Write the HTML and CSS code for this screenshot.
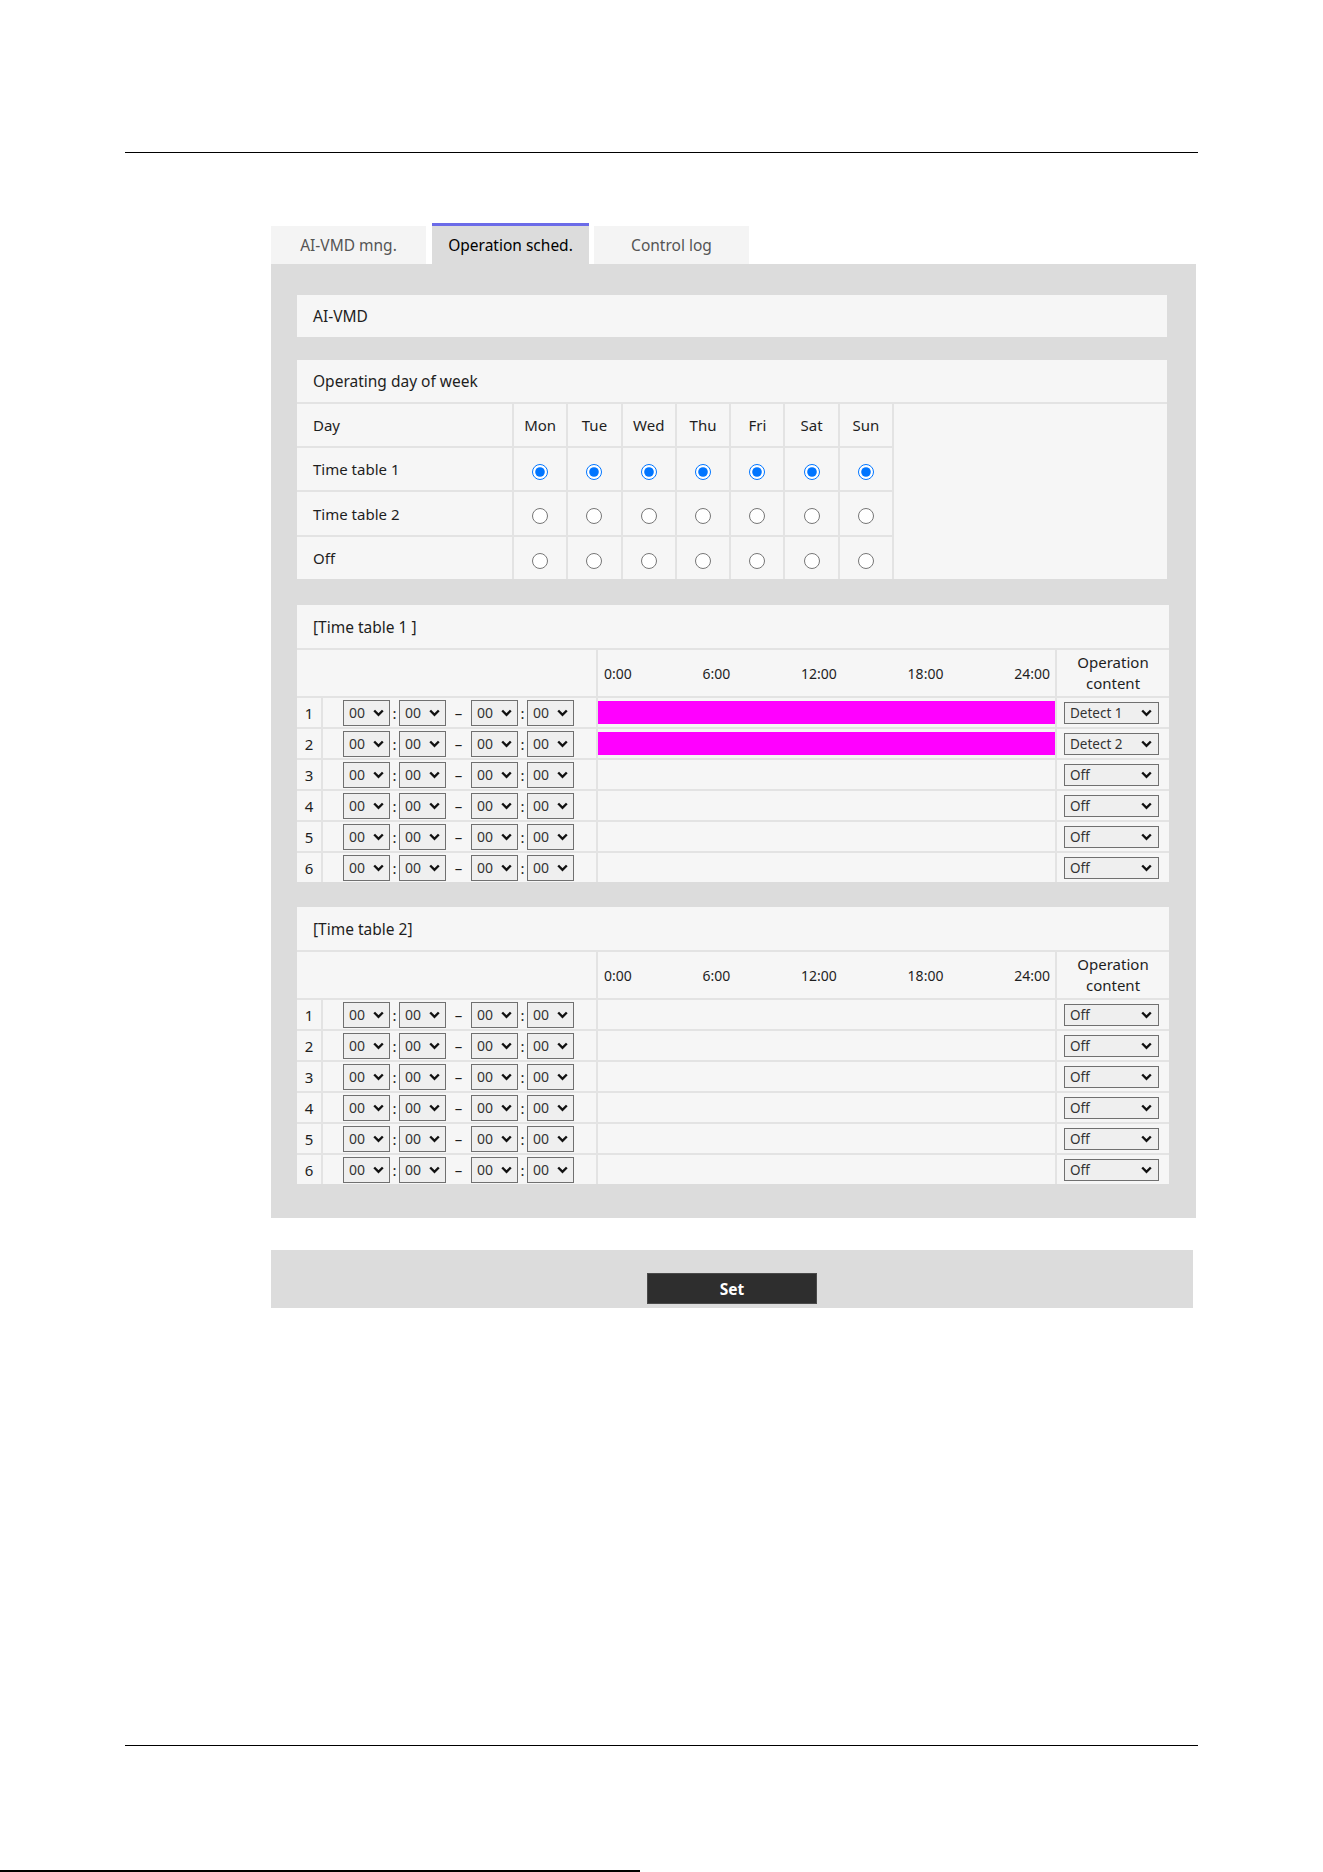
FILE: index.html
```html
<!doctype html>
<html>
 <head>
  <title>Operation sched.</title>
  <meta name="viewport" content="width=device-width, initial-scale=1">
  <link rel="stylesheet" href="styles.css">
 </head>
 <body>
  <div class="page">
   <div class="page-head"></div>
   <main class="main">
    <nav class="tabs">
     <div class="tab">AI-VMD mng.</div>
     <div class="tab active">Operation sched.</div>
     <div class="tab">Control log</div>
    </nav>
    <div class="panel">
     <div class="box">AI-VMD</div>

     <section class="days">
      <div class="title">Operating day of week</div>
      <div class="cell label">Day</div>
      <div class="cell day">Mon</div>
      <div class="cell day">Tue</div>
      <div class="cell day">Wed</div>
      <div class="cell day">Thu</div>
      <div class="cell day">Fri</div>
      <div class="cell day">Sat</div>
      <div class="cell day">Sun</div>
      <div class="cell filler"></div>
      <div class="cell label">Time table 1</div>
      <div class="cell day"><input type="radio" name="mon" checked></div>
      <div class="cell day"><input type="radio" name="tue" checked></div>
      <div class="cell day"><input type="radio" name="wed" checked></div>
      <div class="cell day"><input type="radio" name="thu" checked></div>
      <div class="cell day"><input type="radio" name="fri" checked></div>
      <div class="cell day"><input type="radio" name="sat" checked></div>
      <div class="cell day"><input type="radio" name="sun" checked></div>
      <div class="cell label">Time table 2</div>
      <div class="cell day"><input type="radio" name="mon"></div>
      <div class="cell day"><input type="radio" name="tue"></div>
      <div class="cell day"><input type="radio" name="wed"></div>
      <div class="cell day"><input type="radio" name="thu"></div>
      <div class="cell day"><input type="radio" name="fri"></div>
      <div class="cell day"><input type="radio" name="sat"></div>
      <div class="cell day"><input type="radio" name="sun"></div>
      <div class="cell label">Off</div>
      <div class="cell day"><input type="radio" name="mon"></div>
      <div class="cell day"><input type="radio" name="tue"></div>
      <div class="cell day"><input type="radio" name="wed"></div>
      <div class="cell day"><input type="radio" name="thu"></div>
      <div class="cell day"><input type="radio" name="fri"></div>
      <div class="cell day"><input type="radio" name="sat"></div>
      <div class="cell day"><input type="radio" name="sun"></div>
     </section>

     <section class="table tt1">
      <div class="title">[Time table 1 ]</div>
      <div class="cell blank"></div>
      <div class="cell hours"><span>0:00</span><span>6:00</span><span>12:00</span><span>18:00</span><span>24:00</span></div>
      <div class="cell op-head">Operation<br>content</div>

      <div class="cell num">1</div>
      <div class="cell times"><select class="hm"><option>00</option></select><span class="colon">:</span><select class="hm"><option>00</option></select><span class="dash">&ndash;</span><select class="hm"><option>00</option></select><span class="colon">:</span><select class="hm"><option>00</option></select></div>
      <div class="cell bar"><div class="fill"></div></div>
      <div class="cell op"><select class="opsel"><option>Detect 1</option></select></div>

      <div class="cell num">2</div>
      <div class="cell times"><select class="hm"><option>00</option></select><span class="colon">:</span><select class="hm"><option>00</option></select><span class="dash">&ndash;</span><select class="hm"><option>00</option></select><span class="colon">:</span><select class="hm"><option>00</option></select></div>
      <div class="cell bar"><div class="fill"></div></div>
      <div class="cell op"><select class="opsel"><option>Detect 2</option></select></div>

      <div class="cell num">3</div>
      <div class="cell times"><select class="hm"><option>00</option></select><span class="colon">:</span><select class="hm"><option>00</option></select><span class="dash">&ndash;</span><select class="hm"><option>00</option></select><span class="colon">:</span><select class="hm"><option>00</option></select></div>
      <div class="cell bar"></div>
      <div class="cell op"><select class="opsel"><option>Off</option></select></div>

      <div class="cell num">4</div>
      <div class="cell times"><select class="hm"><option>00</option></select><span class="colon">:</span><select class="hm"><option>00</option></select><span class="dash">&ndash;</span><select class="hm"><option>00</option></select><span class="colon">:</span><select class="hm"><option>00</option></select></div>
      <div class="cell bar"></div>
      <div class="cell op"><select class="opsel"><option>Off</option></select></div>

      <div class="cell num">5</div>
      <div class="cell times"><select class="hm"><option>00</option></select><span class="colon">:</span><select class="hm"><option>00</option></select><span class="dash">&ndash;</span><select class="hm"><option>00</option></select><span class="colon">:</span><select class="hm"><option>00</option></select></div>
      <div class="cell bar"></div>
      <div class="cell op"><select class="opsel"><option>Off</option></select></div>

      <div class="cell num">6</div>
      <div class="cell times"><select class="hm"><option>00</option></select><span class="colon">:</span><select class="hm"><option>00</option></select><span class="dash">&ndash;</span><select class="hm"><option>00</option></select><span class="colon">:</span><select class="hm"><option>00</option></select></div>
      <div class="cell bar"></div>
      <div class="cell op"><select class="opsel"><option>Off</option></select></div>
     </section>

     <section class="table tt2">
      <div class="title">[Time table 2]</div>
      <div class="cell blank"></div>
      <div class="cell hours"><span>0:00</span><span>6:00</span><span>12:00</span><span>18:00</span><span>24:00</span></div>
      <div class="cell op-head">Operation<br>content</div>

      <div class="cell num">1</div>
      <div class="cell times"><select class="hm"><option>00</option></select><span class="colon">:</span><select class="hm"><option>00</option></select><span class="dash">&ndash;</span><select class="hm"><option>00</option></select><span class="colon">:</span><select class="hm"><option>00</option></select></div>
      <div class="cell bar"></div>
      <div class="cell op"><select class="opsel"><option>Off</option></select></div>

      <div class="cell num">2</div>
      <div class="cell times"><select class="hm"><option>00</option></select><span class="colon">:</span><select class="hm"><option>00</option></select><span class="dash">&ndash;</span><select class="hm"><option>00</option></select><span class="colon">:</span><select class="hm"><option>00</option></select></div>
      <div class="cell bar"></div>
      <div class="cell op"><select class="opsel"><option>Off</option></select></div>

      <div class="cell num">3</div>
      <div class="cell times"><select class="hm"><option>00</option></select><span class="colon">:</span><select class="hm"><option>00</option></select><span class="dash">&ndash;</span><select class="hm"><option>00</option></select><span class="colon">:</span><select class="hm"><option>00</option></select></div>
      <div class="cell bar"></div>
      <div class="cell op"><select class="opsel"><option>Off</option></select></div>

      <div class="cell num">4</div>
      <div class="cell times"><select class="hm"><option>00</option></select><span class="colon">:</span><select class="hm"><option>00</option></select><span class="dash">&ndash;</span><select class="hm"><option>00</option></select><span class="colon">:</span><select class="hm"><option>00</option></select></div>
      <div class="cell bar"></div>
      <div class="cell op"><select class="opsel"><option>Off</option></select></div>

      <div class="cell num">5</div>
      <div class="cell times"><select class="hm"><option>00</option></select><span class="colon">:</span><select class="hm"><option>00</option></select><span class="dash">&ndash;</span><select class="hm"><option>00</option></select><span class="colon">:</span><select class="hm"><option>00</option></select></div>
      <div class="cell bar"></div>
      <div class="cell op"><select class="opsel"><option>Off</option></select></div>

      <div class="cell num">6</div>
      <div class="cell times"><select class="hm"><option>00</option></select><span class="colon">:</span><select class="hm"><option>00</option></select><span class="dash">&ndash;</span><select class="hm"><option>00</option></select><span class="colon">:</span><select class="hm"><option>00</option></select></div>
      <div class="cell bar"></div>
      <div class="cell op"><select class="opsel"><option>Off</option></select></div>
     </section>
    </div>

    <div class="setbar">
     <button class="set">Set</button>
    </div>
   </main>
   <div class="page-foot"></div>
  </div>
  <div class="page-edge"></div>
 </body>
</html>
```

FILE: styles.css
```css
body {
 margin: 0;
 background: #fff;
 color: #1e1e1e;
 font-family: "Noto Sans", "Open Sans", sans-serif;
 font-size: 15px;
}
.page {
 width: 1073px;
 margin-left: 125px;
}
.page-head {
 height: 152px;
 border-bottom: 1px solid #000;
}
.main {
 margin: 70px 0 0 146px;
 width: 925px;
}
.tabs {
 display: flex;
 align-items: flex-end;
}
.tab {
 width: 155px;
 height: 38px;
 margin-right: 6px;
 background: #f4f4f4;
 color: #555;
 font-size: 15.5px;
 display: flex;
 align-items: center;
 justify-content: center;
}
.tab.active {
 width: 157px;
 margin-right: 5px;
 background: #dcdcdc;
 color: #000;
 border-top: 3px solid #6b6be8;
}
.panel {
 background: #dcdcdc;
 padding: 31px 27px 34px 26px;
}
.box, .title {
 background: #f6f6f6;
 padding-left: 16px;
 display: flex;
 align-items: center;
 font-size: 15.5px;
}
.box {
 height: 42px;
 margin-right: 2px;
}
.days, .table {
 display: grid;
 gap: 2px;
 background: #e3e3e3;
}
.days {
 margin: 23px 2px 0 0;
 grid-template-columns: 215px repeat(7, 52.3px) 1fr;
 grid-template-rows: 42px 42px 42px 43px 42px;
}
.days .title {
 grid-column: 1 / -1;
}
.cell {
 background: #f6f6f6;
 display: flex;
 align-items: center;
}
.label {
 padding-left: 16px;
}
.day {
 justify-content: center;
}
.filler {
 grid-column: 9;
 grid-row: 2 / span 4;
}
.day input {
 width: 16px;
 height: 16px;
 margin: 5px 0 0;
}
.table {
 grid-template-columns: 24px 273px 1fr 112px;
 grid-template-rows: 43px 46px;
 grid-auto-rows: 29px;
}
.tt1 {
 margin-top: 26px;
}
.tt2 {
 margin-top: 25px;
}
.table .title {
 grid-column: 1 / -1;
}
.blank {
 grid-column: 1 / 3;
}
.hours {
 justify-content: space-between;
 padding: 0 5px 0 6px;
 font-size: 14px;
}
.op-head {
 justify-content: center;
 text-align: center;
 line-height: 21px;
}
.num {
 justify-content: center;
}
.times {
 padding-left: 20px;
}
.colon {
 width: 9px;
 text-align: center;
}
.dash {
 width: 25px;
 text-align: center;
}
select {
 appearance: none;
 -webkit-appearance: none;
 margin: 0;
 border: 1px solid #707070;
 border-radius: 0;
 background: #efefef url("data:image/svg+xml,%3Csvg xmlns='http://www.w3.org/2000/svg' width='11' height='8'%3E%3Cpath d='M1.2 1.5l4.3 4.3 4.3-4.3' fill='none' stroke='%23111' stroke-width='2.4'/%3E%3C/svg%3E") no-repeat;
 color: #333;
 font-family: inherit;
}
.hm {
 width: 47px;
 height: 26px;
 padding: 0 0 0 5px;
 font-size: 14px;
 background-position: right 5px center;
}
.bar {
 align-items: stretch;
 padding: 3px 0;
}
.fill {
 flex: 1;
 background: #ff00ff;
}
.op {
 padding-left: 7px;
}
.opsel {
 width: 95px;
 height: 22px;
 padding: 0 0 0 5px;
 font-size: 13.5px;
 background-position: right 6px center;
}
.setbar {
 margin-top: 32px;
 width: 922px;
 height: 58px;
 background: #dcdcdc;
 display: flex;
 justify-content: center;
 align-items: flex-end;
 padding-bottom: 4px;
 box-sizing: border-box;
}
.set {
 width: 170px;
 height: 31px;
 background: #2e2e2e;
 border: 1px solid #4a4a4a;
 color: #fff;
 font-family: inherit;
 font-weight: bold;
 font-size: 15.5px;
 padding: 0;
}
.page-foot {
 margin-top: 437px;
 border-top: 1px solid #000;
}
.page-edge {
 margin-top: 124px;
 width: 640px;
 border-top: 2px solid #000;
}
```
